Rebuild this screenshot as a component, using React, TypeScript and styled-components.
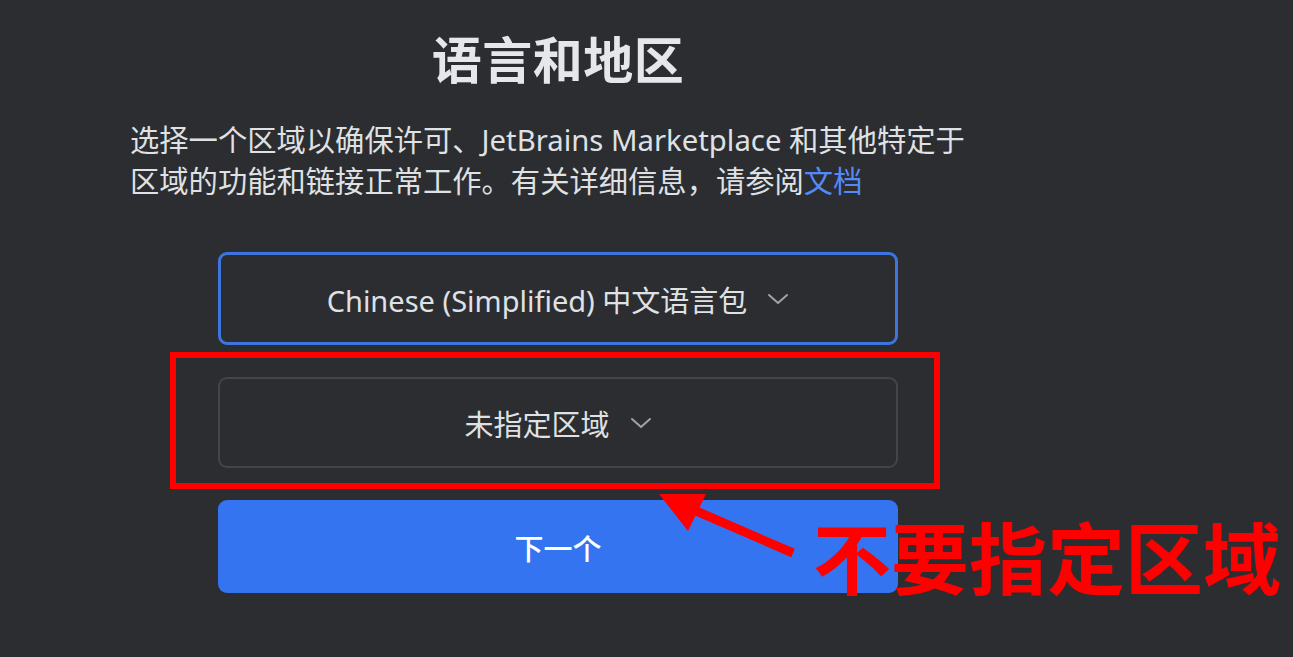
import React from "react";
import styled, { createGlobalStyle } from "styled-components";

const GlobalStyle = createGlobalStyle`
  html, body {
    margin: 0;
    padding: 0;
    background: #2b2d30;
  }
  body {
    font-family: "Noto Sans", "Noto Sans CJK SC", sans-serif;
    color: #dfe1e5;
  }
`;

const Page = styled.div`
  position: relative;
  width: 1293px;
  height: 657px;
  overflow: hidden;
  background: #2b2d30;
  box-sizing: border-box;
  padding: 27px 0 0 130px;
`;

const Column = styled.div`
  width: 856px;
  display: flex;
  flex-direction: column;
  align-items: center;
`;

const Title = styled.h1`
  margin: 0;
  font-family: "Noto Sans CJK SC", sans-serif;
  font-size: 50px;
  line-height: 60px;
  font-weight: 700;
  color: #e6e7ea;
  letter-spacing: 0.5px;
`;

const Intro = styled.p`
  align-self: stretch;
  margin: 33px 0 0;
  font-family: "Noto Sans", "Noto Sans CJK SC", sans-serif;
  font-size: 29.3px;
  line-height: 41px;
  color: #dfe1e5;
`;

const Line = styled.span`
  display: block;
  white-space: nowrap;
`;

const DocLink = styled.a`
  color: #548af7;
  text-decoration: none;
`;

const Controls = styled.div`
  margin-top: 50px;
  width: 680px;
  display: flex;
  flex-direction: column;
  gap: 32px;
`;

const Select = styled.div<{ $focused?: boolean }>`
  box-sizing: border-box;
  height: ${(p) => (p.$focused ? 93 : 91)}px;
  border-radius: 9px;
  border: ${(p) => (p.$focused ? "3px solid #3d74e0" : "2px solid #43454a")};
  background: #2b2d30;
  display: flex;
  align-items: center;
  justify-content: center;
  gap: 20px;
  font-family: "Noto Sans", "Noto Sans CJK SC", sans-serif;
  font-size: 29px;
  color: #dfe1e5;
`;

const Chevron = () => (
  <svg width="22" height="12" viewBox="0 0 22 12" fill="none">
    <path d="M2 2 L11 10 L20 2" stroke="#9fa2a8" strokeWidth="2" strokeLinecap="round" strokeLinejoin="round" />
  </svg>
);

const NextButton = styled.button`
  box-sizing: border-box;
  height: 93px;
  border: none;
  border-radius: 9px;
  background: #3574f0;
  color: #ffffff;
  font-family: "Noto Sans CJK SC", sans-serif;
  font-size: 29px;
  font-weight: 500;
  cursor: pointer;
`;

const Highlight = styled.div`
  position: absolute;
  left: 170px;
  top: 352px;
  width: 770px;
  height: 137px;
  box-sizing: border-box;
  border: 6px solid #ff0000;
  pointer-events: none;
`;

const ArrowLayer = styled.svg`
  position: absolute;
  left: 0;
  top: 0;
  pointer-events: none;
`;

const Note = styled.div`
  position: absolute;
  left: 813px;
  top: 507px;
  font-family: "Noto Sans CJK SC", sans-serif;
  font-size: 78px;
  line-height: 96px;
  font-weight: 700;
  color: #ff0000;
  white-space: nowrap;
`;

export default function App() {
  return (
    <>
      <GlobalStyle />
      <Page>
        <Column>
          <Title>语言和地区</Title>
          <Intro>
            <Line>选择一个区域以确保许可、JetBrains Marketplace 和其他特定于</Line>
            <Line>
              区域的功能和链接正常工作。有关详细信息，请参阅<DocLink href="#">文档</DocLink>
            </Line>
          </Intro>
          <Controls>
            <Select $focused>
              <span>Chinese (Simplified) 中文语言包</span>
              <Chevron />
            </Select>
            <Select>
              <span>未指定区域</span>
              <Chevron />
            </Select>
            <NextButton>下一个</NextButton>
          </Controls>
        </Column>
        <Highlight />
        <ArrowLayer width="1293" height="657" viewBox="0 0 1293 657">
          <line x1="793" y1="553" x2="694" y2="510" stroke="#ff0000" strokeWidth="9" />
          <polygon points="659,494 706,494 688,531" fill="#ff0000" />
        </ArrowLayer>
        <Note>不要指定区域</Note>
      </Page>
    </>
  );
}
